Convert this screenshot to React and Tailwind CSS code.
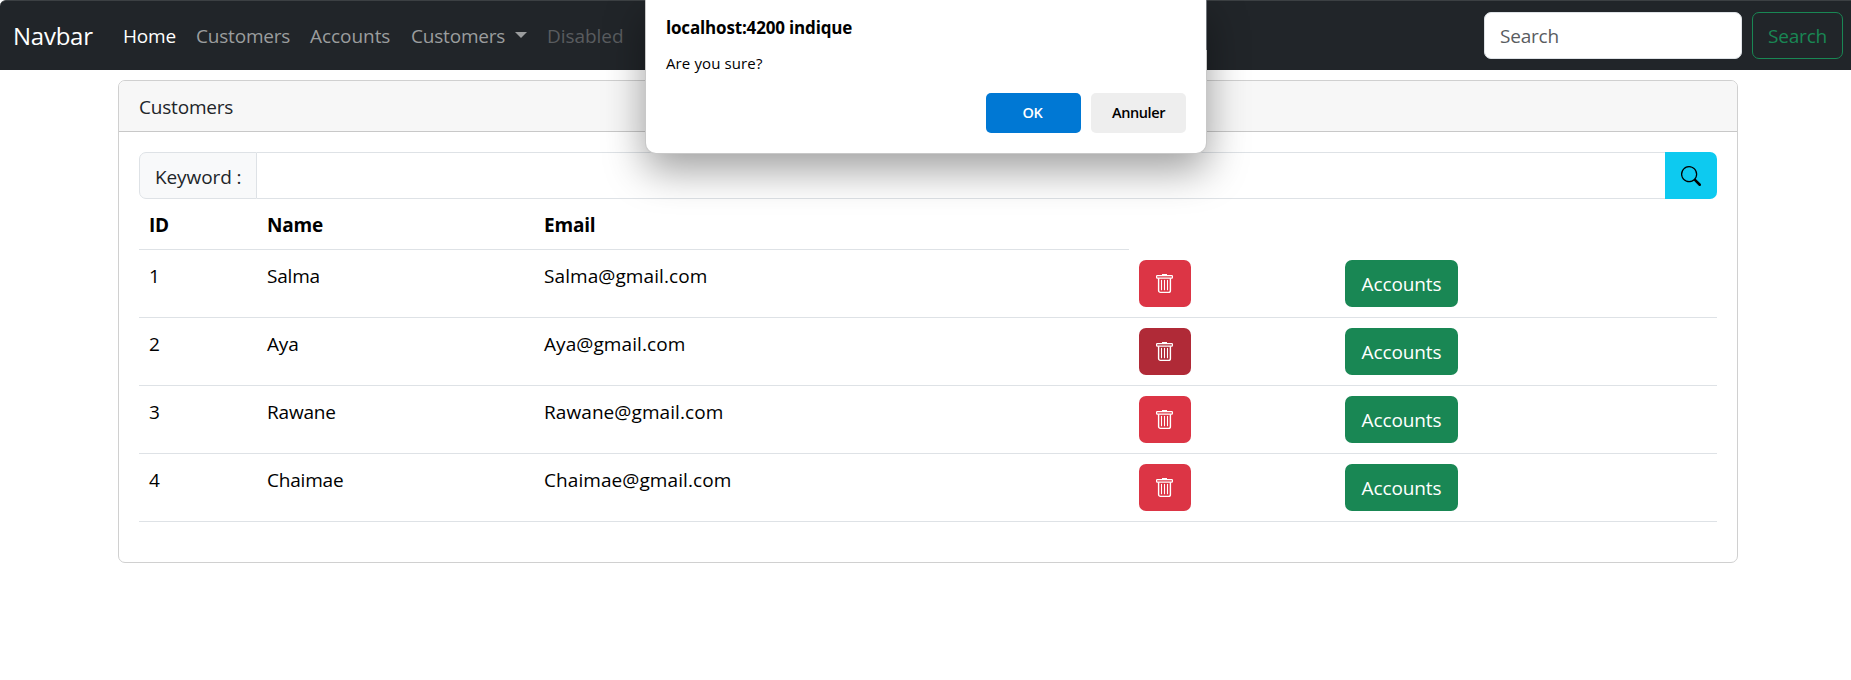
import { BsSearch } from "react-icons/bs";

const customers = [
  { id: 1, name: "Salma", email: "Salma@gmail.com" },
  { id: 2, name: "Aya", email: "Aya@gmail.com", active: true },
  { id: 3, name: "Rawane", email: "Rawane@gmail.com" },
  { id: 4, name: "Chaimae", email: "Chaimae@gmail.com" },
];

function TrashIcon() {
  return (
    <svg width="19" height="21" viewBox="0 0 19 21" fill="none" stroke="currentColor">
      <path d="M7 1.7h5" strokeWidth="1.4" />
      <rect x="1.6" y="2.6" width="15.8" height="2.5" rx="0.6" strokeWidth="1.2" />
      <path d="M3.6 5.2v12.3a1.9 1.9 0 0 0 1.9 1.9h8a1.9 1.9 0 0 0 1.9-1.9V5.2" strokeWidth="1.4" />
      <path d="M6.5 7.2v9.6M9.5 7.2v9.6M12.5 7.2v9.6" strokeWidth="1.1" strokeLinecap="round" />
    </svg>
  );
}

function Navbar() {
  return (
    <nav className="flex h-[70px] items-center rounded-tl-[6px] border-t border-[#3c4043] bg-[#212529] pr-2 pl-[13px]">
      <a className="mr-[30px] w-[80px] text-[24px] tracking-[-0.25px] text-white">Navbar</a>
      <ul className="flex grow text-[#9b9d9e]">
        <li className="w-[73px] text-white">Home</li>
        <li className="w-[114px]">Customers</li>
        <li className="w-[101px] tracking-[-0.05px]">Accounts</li>
        <li className="flex w-[136px]">
          Customers
          <span className="mt-[11px] ml-[10px] h-0 w-0 border-x-[6px] border-t-[6px] border-x-transparent border-t-[#9b9d9e]" />
        </li>
        <li className="tracking-[-0.05px] text-[#595c5f]">Disabled</li>
      </ul>
      <form className="flex gap-[10px]">
        <input
          placeholder="Search"
          className="h-[47px] w-[258px] rounded-[7px] border border-[#dee2e6] bg-white px-[15px] tracking-[-0.2px] placeholder:text-[#595c5f]"
        />
        <button type="button" className="h-[47px] w-[91px] rounded-[7px] border border-[#198754] tracking-[-0.2px] text-[#198754]">
          Search
        </button>
      </form>
    </nav>
  );
}

function CustomerRow({ customer }) {
  const line = "h-[68px] border-b border-[#dee2e6] px-[10px] align-top";
  return (
    <tr>
      <td className={`${line} pt-[11px]`}>{customer.id}</td>
      <td className={`${line} pt-[11px]`}>{customer.name}</td>
      <td className={`${line} pt-[11px] tracking-[0.08px]`}>{customer.email}</td>
      <td className={`${line} pt-[10px]`}>
        <button
          className={`flex h-[47px] w-[52px] items-center justify-center rounded-[7px] pr-px text-white ${customer.active ? "bg-[#b02a37]" : "bg-[#dc3545]"}`}
        >
          <TrashIcon />
        </button>
      </td>
      <td className={`${line} pt-[10px]`}>
        <button className="h-[47px] w-[113px] rounded-[7px] bg-[#198754] tracking-[-0.1px] text-white">Accounts</button>
      </td>
    </tr>
  );
}

function ConfirmDialog() {
  return (
    <div className="absolute top-0 left-[645px] flex h-[154px] w-[562px] flex-col rounded-b-[11px] border border-t-0 border-[#c8c8c8] bg-white px-5 text-black shadow-[0_16px_40px_rgba(0,0,0,0.38)]">
      <span className="absolute top-0 -right-px h-[50px] w-px bg-[#70757a]" />
      <h2 className="mt-[15px] text-[17px] leading-[26px] font-bold tracking-[-0.17px]">localhost:4200 indique</h2>
      <p className="mt-[10px] text-[15px] leading-[24px] tracking-[0.12px]">Are you sure?</p>
      <div className="mt-[18px] flex justify-end gap-[10px] text-[14.5px] font-semibold tracking-[-0.4px]">
        <button className="h-10 w-[95px] rounded-[5px] bg-[#0078d4] pr-[2px] text-white">OK</button>
        <button className="h-10 w-[95px] rounded-[5px] bg-[#eeeeee]">Annuler</button>
      </div>
    </div>
  );
}

export default function App() {
  return (
    <div className="relative h-[680px] w-[1851px] overflow-hidden bg-white font-['Open_Sans',sans-serif] text-[19px] leading-[30px] tracking-[-0.2px] text-[#212529]">
      <Navbar />
      <main className="mt-[10px] ml-[118px] h-[483px] w-[1620px] overflow-hidden rounded-[7px] border border-[#d0d0d0]">
        <header className="h-[51px] border-b border-[#c8c8c8] bg-[#f7f7f7] px-5 pt-[11px]">Customers</header>
        <div className="px-5 pt-5">
          <div className="flex h-[47px]">
            <span className="w-[118px] rounded-l-[7px] border border-[#dee2e6] bg-[#f8f9fa] pt-[9px] pl-[15px] tracking-[-0.1px]">Keyword :</span>
            <input className="grow border-y border-[#dee2e6] bg-white" />
            <button className="flex w-[52px] items-center justify-center rounded-r-[7px] bg-[#0dcaf0] text-black">
              <BsSearch size={20} />
            </button>
          </div>
          <table className="w-[1578px] table-fixed border-separate border-spacing-0 text-black">
            <thead>
              <tr className="text-left">
                <th className="h-[51px] w-[118px] border-b border-[#dee2e6] px-[10px] pt-[2px]">ID</th>
                <th className="w-[277px] border-b border-[#dee2e6] px-[10px] pt-[2px]">Name</th>
                <th className="w-[595px] border-b border-[#dee2e6] px-[10px] pt-[2px]">Email</th>
                <th className="w-[206px]" />
                <th className="w-[382px]" />
              </tr>
            </thead>
            <tbody>
              {customers.map((c) => (
                <CustomerRow key={c.id} customer={c} />
              ))}
            </tbody>
          </table>
        </div>
      </main>
      <ConfirmDialog />
    </div>
  );
}
